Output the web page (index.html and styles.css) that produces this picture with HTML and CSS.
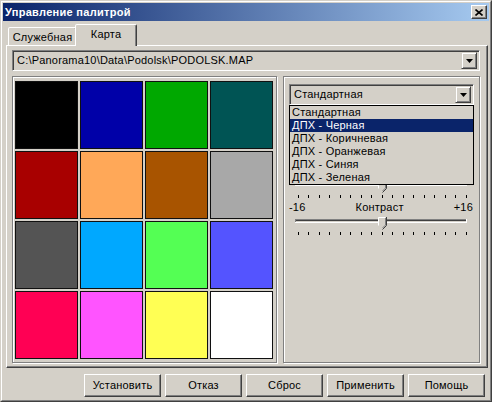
FILE: index.html
```html
<!DOCTYPE html>
<html lang="ru">
<head>
<meta charset="utf-8">
<title>Управление палитрой</title>
<link rel="stylesheet" href="styles.css">
</head>
<body>
<div class="window">
  <div class="frame">
    <div class="titlebar">
      <span class="title">Управление палитрой</span>
      <span class="close">
        <svg width="8" height="7" viewBox="0 0 8 7"><path d="M0.5 0.5 L7.5 6.5 M7.5 0.5 L0.5 6.5" stroke="#000" stroke-width="1.6" fill="none"/></svg>
      </span>
    </div>
    <div class="client">
      <div class="tabs">
        <div class="tab tab-service">Служебная</div>
        <div class="tab tab-map active">Карта</div>
      </div>
      <div class="panel">
        <div class="combo combo-path">
          <span class="combo-value">C:\Panorama10\Data\Podolsk\PODOLSK.MAP</span>
          <span class="drop"><svg width="7" height="4" viewBox="0 0 7 4"><path d="M0 0 H7 L3.5 4 Z" fill="#000"/></svg></span>
        </div>
        <div class="groups">
          <div class="group palette">
            <div class="swatch" style="background:#000000"></div>
            <div class="swatch" style="background:#0000a8"></div>
            <div class="swatch" style="background:#00a800"></div>
            <div class="swatch" style="background:#005454"></div>
            <div class="swatch" style="background:#a80000"></div>
            <div class="swatch" style="background:#ffa858"></div>
            <div class="swatch" style="background:#a85400"></div>
            <div class="swatch" style="background:#a8a8a8"></div>
            <div class="swatch" style="background:#545454"></div>
            <div class="swatch" style="background:#00a8ff"></div>
            <div class="swatch" style="background:#54ff54"></div>
            <div class="swatch" style="background:#5454ff"></div>
            <div class="swatch" style="background:#ff0054"></div>
            <div class="swatch" style="background:#ff54ff"></div>
            <div class="swatch" style="background:#ffff54"></div>
            <div class="swatch" style="background:#ffffff"></div>
          </div>
          <div class="group settings">
            <div class="combo combo-scheme">
              <span class="combo-value">Стандартная</span>
              <span class="drop"><svg width="7" height="4" viewBox="0 0 7 4"><path d="M0 0 H7 L3.5 4 Z" fill="#000"/></svg></span>
            </div>
            <ul class="list">
              <li>Стандартная</li>
              <li class="selected">ДПХ - Черная</li>
              <li>ДПХ - Коричневая</li>
              <li>ДПХ - Оранжевая</li>
              <li>ДПХ - Синяя</li>
              <li>ДПХ - Зеленая</li>
            </ul>
            <div class="slider slider-top">
              <svg width="185" height="22" viewBox="0 0 185 22">
                <g class="track">
                  <rect x="6" y="4" width="172" height="1" fill="#808080"/>
                  <rect x="6" y="4" width="1" height="4" fill="#808080"/>
                  <rect x="7" y="5" width="170" height="1" fill="#404040"/>
                  <rect x="6" y="7" width="172" height="1" fill="#ffffff"/>
                  <rect x="177" y="4" width="1" height="4" fill="#ffffff"/>
                </g>
                <g class="thumb" transform="translate(89 2)">
                  <path d="M0 0 H8 V8 L4 12 L0 8 Z" fill="#d4d0c8"/>
                  <path d="M0.5 8.5 V0.5 H7.5" stroke="#fff" fill="none"/>
                  <path d="M7.5 1 V8 L4.5 11" stroke="#808080" fill="none"/>
                  <path d="M8.5 0 V8.5 L4.5 12.5" stroke="#404040" fill="none"/>
                </g>
                <g fill="#000">
                  <rect x="9" y="17" width="1" height="3"/><rect x="19" y="17" width="1" height="3"/><rect x="30" y="17" width="1" height="3"/><rect x="40" y="17" width="1" height="3"/><rect x="51" y="17" width="1" height="3"/><rect x="61" y="17" width="1" height="3"/><rect x="72" y="17" width="1" height="3"/><rect x="82" y="17" width="1" height="3"/><rect x="93" y="17" width="1" height="3"/><rect x="103" y="17" width="1" height="3"/><rect x="114" y="17" width="1" height="3"/><rect x="124" y="17" width="1" height="3"/><rect x="135" y="17" width="1" height="3"/><rect x="145" y="17" width="1" height="3"/><rect x="156" y="17" width="1" height="3"/><rect x="166" y="17" width="1" height="3"/><rect x="177" y="17" width="1" height="3"/>
                </g>
              </svg>
            </div>
            <div class="scale">
              <span>-16</span><span>Контраст</span><span>+16</span>
            </div>
            <div class="slider slider-contrast">
              <svg width="185" height="22" viewBox="0 0 185 22">
                <g class="track">
                  <rect x="6" y="4" width="172" height="1" fill="#808080"/>
                  <rect x="6" y="4" width="1" height="4" fill="#808080"/>
                  <rect x="7" y="5" width="170" height="1" fill="#404040"/>
                  <rect x="6" y="7" width="172" height="1" fill="#ffffff"/>
                  <rect x="177" y="4" width="1" height="4" fill="#ffffff"/>
                </g>
                <g class="thumb" transform="translate(89 2)">
                  <path d="M0 0 H8 V8 L4 12 L0 8 Z" fill="#d4d0c8"/>
                  <path d="M0.5 8.5 V0.5 H7.5" stroke="#fff" fill="none"/>
                  <path d="M7.5 1 V8 L4.5 11" stroke="#808080" fill="none"/>
                  <path d="M8.5 0 V8.5 L4.5 12.5" stroke="#404040" fill="none"/>
                </g>
                <g fill="#000">
                  <rect x="9" y="17" width="1" height="3"/><rect x="19" y="17" width="1" height="3"/><rect x="30" y="17" width="1" height="3"/><rect x="40" y="17" width="1" height="3"/><rect x="51" y="17" width="1" height="3"/><rect x="61" y="17" width="1" height="3"/><rect x="72" y="17" width="1" height="3"/><rect x="82" y="17" width="1" height="3"/><rect x="93" y="17" width="1" height="3"/><rect x="103" y="17" width="1" height="3"/><rect x="114" y="17" width="1" height="3"/><rect x="124" y="17" width="1" height="3"/><rect x="135" y="17" width="1" height="3"/><rect x="145" y="17" width="1" height="3"/><rect x="156" y="17" width="1" height="3"/><rect x="166" y="17" width="1" height="3"/><rect x="177" y="17" width="1" height="3"/>
                </g>
              </svg>
            </div>
          </div>
        </div>
      </div>
      <div class="buttons">
        <div class="btn">Установить</div>
        <div class="btn">Отказ</div>
        <div class="btn">Сброс</div>
        <div class="btn">Применить</div>
        <div class="btn">Помощь</div>
      </div>
    </div>
  </div>
</div>
</body>
</html>
```
FILE: styles.css
```css
* { box-sizing: border-box; }
html, body { margin: 0; padding: 0; }
body {
  background: #d4d0c8;
  font-family: "Liberation Sans", Arial, sans-serif;
  font-size: 11px;
  letter-spacing: 0.2px;
  color: #000;
}
.window {
  width: 492px;
  height: 402px;
  border: 1px solid;
  border-color: #d4d0c8 #404040 #404040 #d4d0c8;
  background: #d4d0c8;
}
.frame {
  height: 100%;
  border: 1px solid;
  border-color: #fff #808080 #808080 #fff;
  padding: 1px;
  display: flex;
  flex-direction: column;
}
.titlebar {
  height: 18px;
  flex: none;
  display: flex;
  align-items: center;
  justify-content: space-between;
  padding: 0 2px 0 2px;
  background: linear-gradient(to right, #0a246a, #a6caf0);
}
.title {
  color: #fff;
  font-weight: bold;
  font-size: 11px;
  letter-spacing: 0.3px;
  line-height: 18px;
}
.close {
  width: 16px;
  height: 14px;
  display: flex;
  align-items: center;
  justify-content: center;
  background: #d4d0c8;
  border: 1px solid;
  border-color: #fff #404040 #404040 #fff;
  box-shadow: inset -1px -1px #808080;
}
.client {
  flex: 1;
  display: flex;
  flex-direction: column;
}
.tabs {
  height: 24px;
  flex: none;
  display: flex;
  align-items: flex-end;
  padding-left: 5px;
}
.tab {
  height: 18px;
  border: 1px solid;
  border-bottom: none;
  border-color: #fff #404040 transparent #fff;
  box-shadow: inset -1px 0 #808080;
  border-radius: 2px 2px 0 0;
  background: #d4d0c8;
  display: flex;
  align-items: center;
  justify-content: center;
  line-height: 13px;
}
.tab-service { width: 69px; padding-top: 1px; }
.tab.active {
  width: 62px;
  height: 22px;
  margin-left: -2px;
  margin-bottom: -1px;
  position: relative;
  z-index: 1;
  padding-bottom: 3px;
}
.panel {
  height: 323px;
  flex: none;
  margin: 0 1px 0 3px;
  border-top: 1px solid #fff;
  border-left: 1px solid #fff;
  border-right: 1px solid #404040;
  border-bottom: 1px solid #404040;
  box-shadow: inset -1px -1px #808080;
  padding: 4px 6px 3px 5px;
  display: flex;
  flex-direction: column;
}
.combo {
  height: 21px;
  border: 1px solid;
  border-color: #808080 #fff #fff #808080;
  box-shadow: inset 1px 1px #404040, inset -1px -1px #d4d0c8;
  display: flex;
  align-items: center;
  justify-content: space-between;
  padding: 2px 2px 2px 4px;
  background: #d4d0c8;
}
.combo-path { width: 468px; flex: none; }
.combo-value { line-height: 13px; white-space: nowrap; }
.drop {
  width: 16px;
  height: 17px;
  display: flex;
  align-items: center;
  justify-content: center;
  border: 1px solid;
  border-color: #d4d0c8 #404040 #404040 #d4d0c8;
  box-shadow: inset 1px 1px #fff, inset -1px -1px #808080;
  background: #d4d0c8;
}
.groups {
  margin-top: 5px;
  height: 287px;
  display: flex;
  gap: 6px;
}
.group {
  height: 287px;
  border: 1px solid #808080;
  box-shadow: inset 1px 1px #fff, 1px 1px #fff;
}
.palette {
  width: 265px;
  padding: 4px 0 0 2px;
  display: grid;
  grid-template-columns: repeat(4, 63px);
  grid-template-rows: repeat(4, 68px);
  gap: 2px;
  align-content: start;
}
.swatch {
  border: 1px solid #101010;
}
.settings {
  width: 197px;
  position: relative;
  padding: 7px 0 0 5px;
}
.combo-scheme { width: 185px; }
.list {
  position: absolute;
  left: 5px;
  top: 28px;
  width: 185px;
  margin: 0;
  padding: 0;
  list-style: none;
  border: 1px solid #000;
  background: #d4d0c8;
  z-index: 2;
}
.list li {
  height: 13px;
  line-height: 13px;
  padding-left: 2px;
  white-space: nowrap;
}
.list li.selected {
  background: #0a246a;
  color: #fff;
}
.slider { height: 22px; width: 185px; }
.slider svg { display: block; }
.slider-top { margin-top: 73px; }
.scale {
  width: 185px;
  height: 13px;
  display: flex;
  justify-content: space-between;
  line-height: 13px;
  padding: 1px 1px 0 0;
}
.slider-contrast { margin-top: 2px; }
.buttons {
  margin-top: 6px;
  display: flex;
  justify-content: flex-end;
  gap: 4px;
  padding-right: 4px;
}
.btn {
  width: 77px;
  height: 23px;
  border: 1px solid;
  border-color: #fff #404040 #404040 #fff;
  box-shadow: inset -1px -1px #808080;
  display: flex;
  align-items: center;
  justify-content: center;
  line-height: 13px;
}
```
